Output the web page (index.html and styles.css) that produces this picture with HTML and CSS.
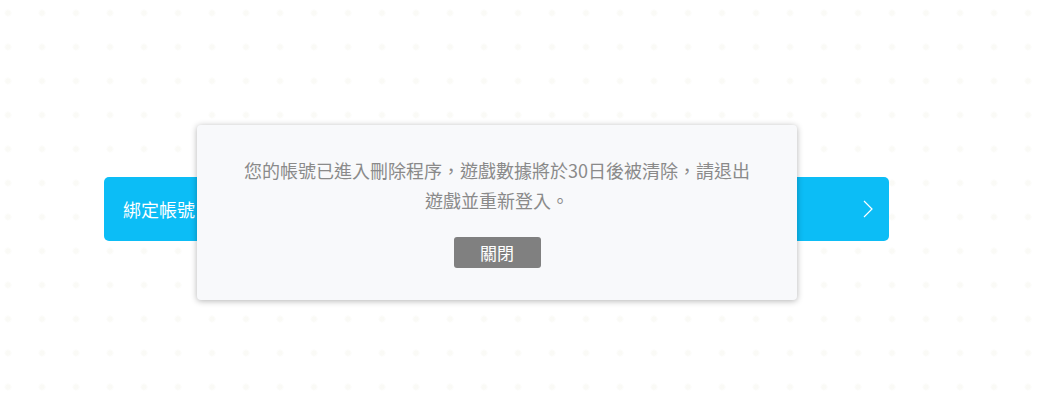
FILE: index.html
```html
<!DOCTYPE html>
<html lang="zh-Hant">
<head>
  <meta charset="UTF-8" />
  <meta name="viewport" content="width=device-width, initial-scale=1.0"/>
  <title>綁定帳號</title>
  <link rel="stylesheet" href="styles.css">
</head>
<body>
  <div class="page">
    <div class="bind-row">
      <div class="bind-bar">
        <span class="bind-label">綁定帳號</span>
        <svg class="chevron" width="10" height="18" viewBox="0 0 10 18">
          <path d="M1 1 L9 9 L1 17" fill="none" stroke="#fff" stroke-width="1.2"/>
        </svg>
      </div>

      <div class="dialog">
        <p class="dialog-text">您的帳號已進入刪除程序，遊戲數據將於30日後被清除，請退出遊戲並重新登入。</p>
        <button class="dialog-btn">關閉</button>
      </div>
    </div>
  </div>
</body>
</html>
```

FILE: styles.css
```css
html, body {
  margin: 0;
  padding: 0;
}
body {
  font-family: "Noto Sans CJK TC", "Noto Sans", sans-serif;
  background-color: #fff;
  background-image: radial-gradient(circle, rgba(225, 225, 200, 0.16) 2px, transparent 4px);
  background-size: 34px 34px;
  background-position: -9px -4px;
  width: 1057px;
  height: 410px;
  overflow: hidden;
}
.page {
  padding: 177px 0 0 104px;
}
.bind-row {
  position: relative;
  width: 785px;
}
.bind-bar {
  display: flex;
  align-items: center;
  justify-content: space-between;
  height: 64px;
  padding: 0 16px 0 19px;
  background: #0cbdf6;
  border-radius: 5px;
  color: #fff;
  box-sizing: border-box;
}
.bind-label {
  font-size: 18px;
}
.dialog {
  position: absolute;
  left: 93px;
  top: -52px;
  width: 600px;
  box-sizing: border-box;
  padding: 30px 40px 32px;
  background: #f8f9fb;
  border-radius: 4px;
  box-shadow: 0 1px 6px rgba(0, 0, 0, 0.3);
  text-align: center;
}
.dialog-text {
  margin: 0;
  font-size: 18px;
  line-height: 30px;
  color: #8a8a8a;
}
.dialog-btn {
  display: block;
  margin: 22px auto 0;
  width: 87px;
  height: 31px;
  padding: 0;
  border: none;
  border-radius: 3px;
  background: #808080;
  color: #fff;
  font-family: inherit;
  font-size: 17px;
}
```
